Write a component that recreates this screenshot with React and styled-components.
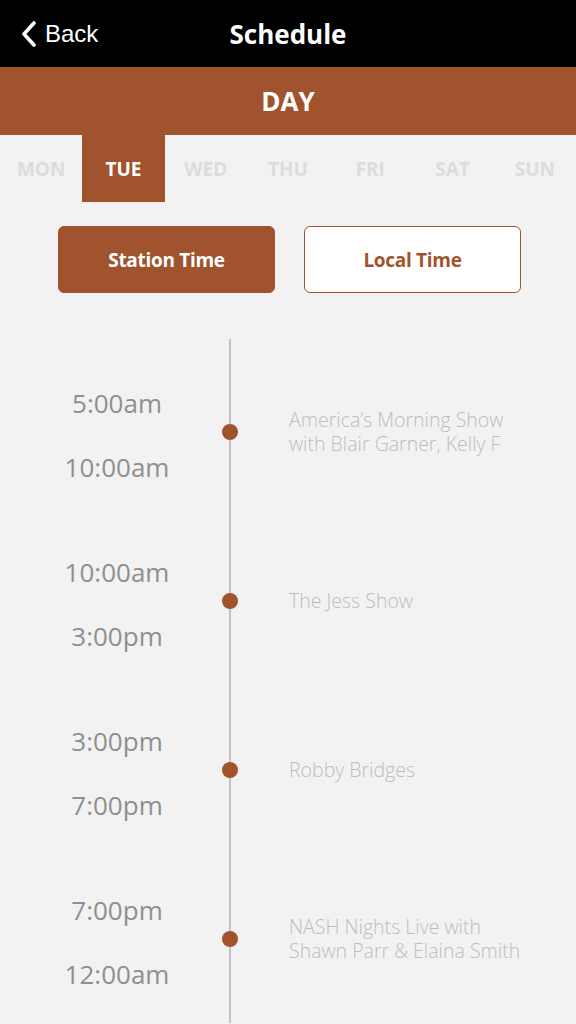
import React from "react";
import styled, { createGlobalStyle } from "styled-components";

const ORANGE = "#a1532e";

const GlobalStyle = createGlobalStyle`
  body {
    margin: 0;
    background: #f2f2f2;
    font-family: "Open Sans", "Noto Sans", sans-serif;
  }
`;

const days = ["MON", "TUE", "WED", "THU", "FRI", "SAT", "SUN"];

const shows = [
  { start: "5:00am", end: "10:00am", title: "America’s Morning Show\nwith Blair Garner, Kelly F" },
  { start: "10:00am", end: "3:00pm", title: "The Jess Show" },
  { start: "3:00pm", end: "7:00pm", title: "Robby Bridges" },
  { start: "7:00pm", end: "12:00am", title: "NASH Nights Live with\nShawn Parr & Elaina Smith" },
];

function App() {
  return (
    <Page>
      <GlobalStyle />
      <NavBar>
        <BackButton>
          <svg width="16" height="26" viewBox="0 0 16 26">
            <polyline
              points="13,2 3,13 13,24"
              fill="none"
              stroke="#fff"
              strokeWidth="3.6"
              strokeLinecap="round"
              strokeLinejoin="round"
            />
          </svg>
          Back
        </BackButton>
        <Title>Schedule</Title>
      </NavBar>

      <DayBar>DAY</DayBar>

      <Tabs>
        {days.map((d) => (
          <Tab key={d} active={d === "TUE"}>
            {d}
          </Tab>
        ))}
      </Tabs>

      <Toggle>
        <ToggleButton selected>Station Time</ToggleButton>
        <ToggleButton>Local Time</ToggleButton>
      </Toggle>

      <Timeline>
        {shows.map((s) => (
          <Row key={s.start}>
            <Times>
              <Time>{s.start}</Time>
              <Time>{s.end}</Time>
            </Times>
            <Dot />
            <ShowName>{s.title}</ShowName>
          </Row>
        ))}
      </Timeline>
    </Page>
  );
}

const Page = styled.div`
  width: 576px;
  min-height: 1024px;
  overflow: hidden;
  background: #f2f2f2;
`;

const NavBar = styled.header`
  height: 67px;
  background: #000;
  display: flex;
  align-items: center;
  justify-content: center;
  position: relative;
`;

const BackButton = styled.div`
  position: absolute;
  left: 21px;
  top: 0;
  bottom: 0;
  display: flex;
  align-items: center;
  gap: 8px;
  color: #fff;
  font-family: "Liberation Sans", Arial, sans-serif;
  font-size: 24px;
`;

const Title = styled.h1`
  margin: 0;
  color: #fff;
  font-size: 26px;
  font-weight: 700;
`;

const DayBar = styled.div`
  height: 68px;
  background: ${ORANGE};
  color: #fff;
  font-size: 26px;
  font-weight: 700;
  display: flex;
  align-items: center;
  justify-content: center;
`;

const Tabs = styled.nav`
  display: grid;
  grid-template-columns: repeat(7, 1fr);
  height: 67px;
`;

const Tab = styled.div`
  display: flex;
  align-items: center;
  justify-content: center;
  font-size: 19px;
  font-weight: 700;
  color: ${(p) => (p.active ? "#fff" : "#dcdcdc")};
  background: ${(p) => (p.active ? ORANGE : "transparent")};
`;

const Toggle = styled.div`
  display: flex;
  gap: 29px;
  margin-top: 24px;
  padding-left: 58px;
`;

const ToggleButton = styled.button`
  width: 217px;
  height: 67px;
  border-radius: 6px;
  border: 1.5px solid ${ORANGE};
  background: ${(p) => (p.selected ? ORANGE : "#fff")};
  color: ${(p) => (p.selected ? "#fff" : ORANGE)};
  font-family: "Open Sans", "Noto Sans", sans-serif;
  font-size: 19px;
  font-weight: 700;
  letter-spacing: -0.3px;
`;

const Timeline = styled.section`
  position: relative;
  margin-top: 46px;
  padding-top: 8px;

  &::before {
    content: "";
    position: absolute;
    left: 229px;
    top: 0;
    bottom: 0;
    width: 2px;
    background: #c3c3c3;
  }
`;

const Row = styled.div`
  display: grid;
  grid-template-columns: 222px 16px 1fr;
  align-items: center;
  height: 169px;
`;

const Times = styled.div`
  display: flex;
  flex-direction: column;
  align-items: center;
  gap: 34px;
  padding: 6px 0 0 12px;
`;

const Time = styled.div`
  font-size: 26px;
  line-height: 30px;
  color: #8f8f8f;
`;

const Dot = styled.span`
  position: relative;
  z-index: 1;
  width: 16px;
  height: 16px;
  border-radius: 50%;
  background: ${ORANGE};
`;

const ShowName = styled.div`
  padding-left: 51px;
  font-size: 19.5px;
  font-weight: 300;
  line-height: 24px;
  color: #bdbdbd;
  white-space: pre-line;
`;

export default App;
